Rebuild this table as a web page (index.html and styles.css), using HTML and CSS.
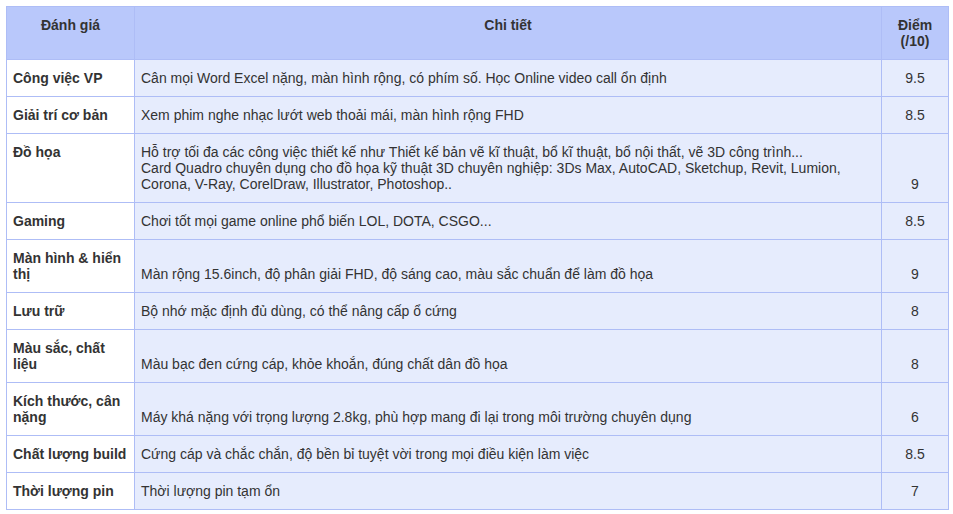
FILE: index.html
```html
<!DOCTYPE html>
<html lang="vi">
<head>
<meta charset="utf-8">
<title>Đánh giá</title>
<link rel="stylesheet" href="styles.css">
</head>
<body>
<table class="review">
  <colgroup>
    <col class="c-name">
    <col class="c-detail">
    <col class="c-score">
  </colgroup>
  <thead>
    <tr>
      <th>Đánh giá</th>
      <th>Chi tiết</th>
      <th>Điểm<br>(/10)</th>
    </tr>
  </thead>
  <tbody>
    <tr><td class="name">Công việc VP</td><td class="detail">Cân mọi Word Excel nặng, màn hình rộng, có phím số. Học Online video call ổn định</td><td class="score">9.5</td></tr>
    <tr><td class="name">Giải trí cơ bản</td><td class="detail">Xem phim nghe nhạc lướt web thoải mái, màn hình rộng FHD</td><td class="score">8.5</td></tr>
    <tr><td class="name">Đồ họa</td><td class="detail">Hỗ trợ tối đa các công việc thiết kế như Thiết kế bản vẽ kĩ thuật, bổ kĩ thuật, bổ nội thất, vẽ 3D công trình...<br>Card Quadro chuyên dụng cho đồ họa kỹ thuật 3D chuyên nghiệp: 3Ds Max, AutoCAD, Sketchup, Revit, Lumion, Corona, V-Ray, CorelDraw, Illustrator, Photoshop..</td><td class="score">9</td></tr>
    <tr><td class="name">Gaming</td><td class="detail">Chơi tốt mọi game online phổ biến LOL, DOTA, CSGO...</td><td class="score">8.5</td></tr>
    <tr><td class="name">Màn hình &amp; hiển thị</td><td class="detail">Màn rộng 15.6inch, độ phân giải FHD, độ sáng cao, màu sắc chuẩn để làm đồ họa</td><td class="score">9</td></tr>
    <tr><td class="name">Lưu trữ</td><td class="detail">Bộ nhớ mặc định đủ dùng, có thể nâng cấp ổ cứng</td><td class="score">8</td></tr>
    <tr><td class="name">Màu sắc, chất liệu</td><td class="detail">Màu bạc đen cứng cáp, khỏe khoắn, đúng chất dân đồ họa</td><td class="score">8</td></tr>
    <tr><td class="name">Kích thước, cân nặng</td><td class="detail">Máy khá nặng với trọng lượng 2.8kg, phù hợp mang đi lại trong môi trường chuyên dụng</td><td class="score">6</td></tr>
    <tr><td class="name">Chất lượng build</td><td class="detail">Cứng cáp và chắc chắn, độ bền bỉ tuyệt vời trong mọi điều kiện làm việc</td><td class="score">8.5</td></tr>
    <tr><td class="name">Thời lượng pin</td><td class="detail">Thời lượng pin tạm ổn</td><td class="score">7</td></tr>
  </tbody>
</table>
</body>
</html>
```
FILE: styles.css
```css
html, body {
  margin: 0;
  padding: 0;
  background: #ffffff;
}
body {
  padding: 6px;
  font-family: "Liberation Sans", Arial, sans-serif;
  font-size: 14px;
  line-height: 16px;
  color: #333333;
}
.review {
  border-collapse: collapse;
  width: 943px;
  table-layout: fixed;
}
.c-name { width: 128px; }
.c-score { width: 67px; }
.review th,
.review td {
  border: 1px solid #aebdf6;
  padding: 10px 6px;
}
.review th {
  background: #b9c8fb;
  font-weight: bold;
  text-align: center;
  vertical-align: top;
  color: #333333;
}
.review td {
  background: #e6ecfd;
  vertical-align: bottom;
}
.review td.name {
  background: #ffffff;
  font-weight: bold;
  vertical-align: top;
}
.review td.score {
  text-align: center;
}
```
